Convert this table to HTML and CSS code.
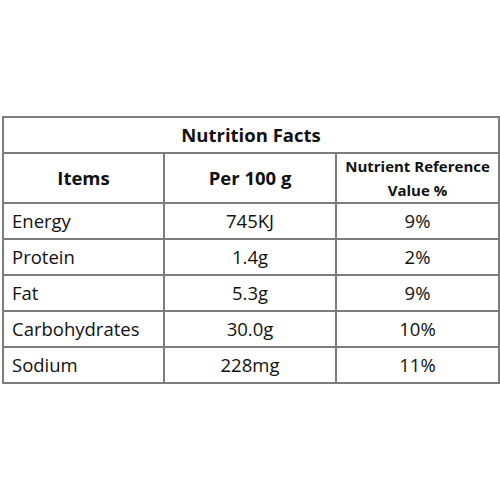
FILE: index.html
```html
<!DOCTYPE html>
<html>
<head>
<meta charset="utf-8">
<link rel="stylesheet" href="styles.css">
</head>
<body>
<table class="facts">
  <colgroup>
    <col class="c1"><col class="c2"><col class="c3">
  </colgroup>
  <tr class="title"><th colspan="3">Nutrition Facts</th></tr>
  <tr class="head">
    <th>Items</th>
    <th>Per 100 g</th>
    <th class="small">Nutrient Reference<br>Value %</th>
  </tr>
  <tr><td class="name">Energy</td><td>745KJ</td><td>9%</td></tr>
  <tr><td class="name">Protein</td><td>1.4g</td><td>2%</td></tr>
  <tr><td class="name">Fat</td><td>5.3g</td><td>9%</td></tr>
  <tr><td class="name">Carbohydrates</td><td>30.0g</td><td>10%</td></tr>
  <tr><td class="name">Sodium</td><td>228mg</td><td>11%</td></tr>
</table>
</body>
</html>
```
FILE: styles.css
```css
html, body {
  margin: 0;
  background: #fff;
}
body {
  padding: 116px 0 0 2px;
  font-family: "Open Sans", "Noto Sans", sans-serif;
  color: #111;
}
.facts {
  border-collapse: collapse;
  width: 496px;
  table-layout: fixed;
}
.c1 { width: 161px; }
.c2 { width: 172px; }
.c3 { width: 163px; }
.facts th, .facts td {
  border: 2px solid #7c7c7c;
  padding: 0;
  text-align: center;
  font-size: 18.5px;
  line-height: 24px;
}
.facts th { font-weight: 700; }
.title th { height: 34px; }
.head th { height: 47px; }
.head th.small { font-size: 15px; line-height: 24px; }
.facts td { height: 34px; }
.facts td.name { text-align: left; padding-left: 8px; }
```
